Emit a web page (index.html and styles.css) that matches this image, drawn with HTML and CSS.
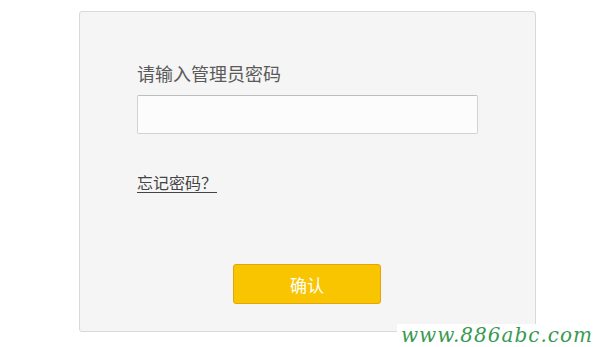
FILE: index.html
```html
<!DOCTYPE html>
<html lang="zh">
<head>
<meta charset="utf-8">
<link rel="stylesheet" href="styles.css">
</head>
<body>
<div class="panel">
  <div class="label">请输入管理员密码</div>
  <div class="input"></div>
  <a class="forgot">忘记密码？</a>
  <div class="actions"><button class="btn">确认</button></div>
</div>
<div class="mark">www.886abc.com</div>
</body>
</html>
```
FILE: styles.css
```css
html, body { margin: 0; padding: 0; background: #fff; }
body { font-family: "Noto Sans CJK SC", "Liberation Sans", sans-serif; width: 600px; height: 347px; overflow: hidden; position: relative; }
.panel {
  margin: 11px 0 0 79px;
  height: 319px;
  border: 1px solid #d9d9d9;
  border-radius: 3px;
  background: #f5f5f5;
  padding: 0 0 0 57px;
  box-sizing: content-box;
  width: 398px;
  display: flex;
  flex-direction: column;
  align-items: flex-start;
}
.label { margin-top: 49px; font-size: 18px; line-height: 24px; color: #5a5a5a; }
.input {
  margin-top: 10px;
  width: 339px;
  height: 37px;
  background: #fcfcfc;
  border: 1px solid #d2d2d2;
  border-top-color: #bdbdbd;
  border-radius: 2px;
}
.forgot {
  margin-top: 38px;
  font-size: 16px;
  line-height: 20px;
  color: #444;
  border-bottom: 1px solid #444;
}
.actions { width: 341px; display: flex; justify-content: flex-start; margin-top: 71px; padding-left: 96px; box-sizing: border-box; }
.btn {
  width: 148px; height: 40px;
  background: #f9c400;
  border: 1px solid #e5a40c;
  border-radius: 3px;
  color: #fff;
  font-family: "Noto Sans CJK SC", sans-serif;
  font-size: 17px;
  padding: 0;
}
.mark {
  position: absolute;
  left: 397px; top: 324px;
  width: 203px; height: 23px;
  background: #fff;
  color: #3a9a52;
  font-family: "DejaVu Serif", "Liberation Serif", serif;
  font-style: italic;
  font-weight: 300;
  font-size: 20px;
  line-height: 22px;
  letter-spacing: 1px;
  padding-left: 4px;
  box-sizing: border-box;
  white-space: nowrap;
}
```
